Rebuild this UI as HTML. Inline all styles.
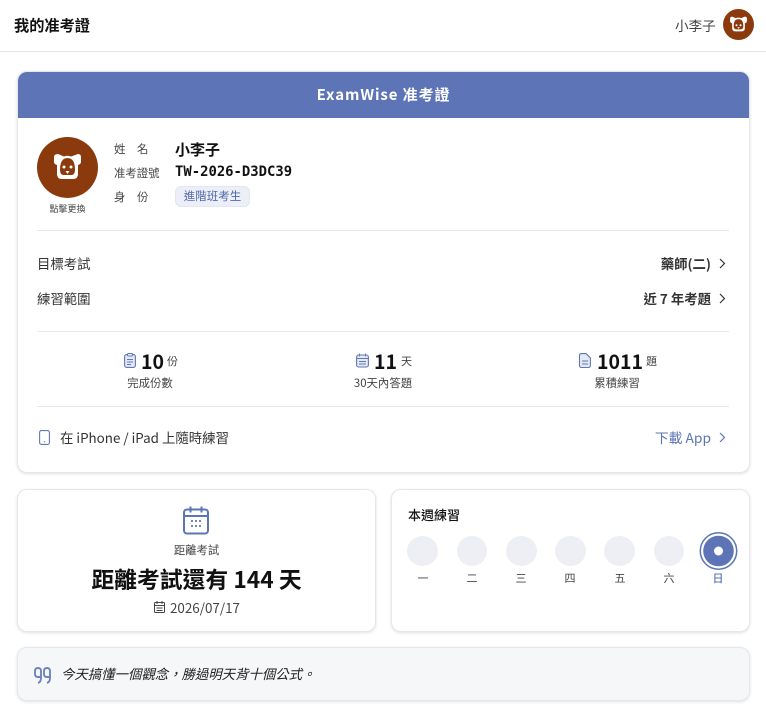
<!DOCTYPE html>
<html lang="zh-Hant"><head><meta charset="utf-8"><style>
*{box-sizing:border-box;margin:0;padding:0}
html,body{width:766px;height:708px;overflow:hidden;background:#fff}
body{position:relative;font-family:"Noto Sans CJK TC","Liberation Sans",sans-serif;color:#111}
.a{position:absolute;white-space:nowrap}
.c{text-align:center}
.card{position:absolute;background:#fff;border:1px solid #e6e7ea;border-radius:10px;box-shadow:0 1px 3px rgba(0,0,0,.12)}
.hr{position:absolute;left:37px;width:692px;height:1px;background:#e8e8ea}
.lab{font-size:11.4px;color:#444;line-height:16px}
.row{font-size:13.4px;color:#333;line-height:18px}
.val{font-size:13.4px;font-weight:700;color:#333;line-height:18px;text-align:right;right:55px}
.num{font-size:19.500px;font-weight:700;color:#111;line-height:24px}
.unit{font-size:11px;color:#444;line-height:14px}
.sub{font-size:11.400px;color:#444;line-height:14px;text-align:center}
.dot{position:absolute;top:536px;width:31px;height:30px;border-radius:50%;background:#eeeff5}
.d{position:absolute;top:571px;width:20px;text-align:center;font-size:11px;color:#444;line-height:14px}
svg{position:absolute;overflow:visible}
</style></head><body>
<div class="a" style="left:14px;top:15px;font-size:15.200px;font-weight:700;line-height:21px">我的准考證</div>
<div class="a" style="left:675px;top:16px;font-size:13.600px;color:#444;line-height:18px">小李子</div>
<svg style="left:723px;top:9px" width="31" height="31" viewBox="0 0 61 61"><circle cx="30.500" cy="30.500" r="30.500" fill="#8b3a0e"/><path d="M18 15L25 18Q30.500 16 36 18L43 15Q47 15 47 19L47 24Q47 27 43 28V38Q43 44 37 44H24Q18 44 18 38V28Q14 27 14 24V19Q14 15 18 15z" fill="#fff"/><path d="M21 34Q21 20 30.500 20T40 34Q40 40 35 40H26Q21 40 21 34z" fill="#8b3a0e"/><circle cx="26.500" cy="32" r="2" fill="#fff"/><circle cx="34.500" cy="32" r="2" fill="#fff"/><path d="M28 36h5l-2.500 3z" fill="#fff"/></svg>
<div class="a" style="left:0;top:51px;width:766px;height:1px;background:#e6e6e8"></div>

<div class="card" style="left:17px;top:71px;width:733px;height:402px"></div>
<div class="a c" style="left:18px;top:72px;width:731px;height:46px;background:#5d74b6;border-radius:9px 9px 0 0;color:#fff;font-size:15px;font-weight:700;line-height:46px;letter-spacing:.9px">ExamWise 准考證</div>

<svg style="left:37px;top:137px" width="61" height="61" viewBox="0 0 61 61"><circle cx="30.500" cy="30.500" r="30.500" fill="#8b3a0e"/><path d="M21 17L27 19.500Q30.500 18 34 19.500L41 17Q44 17 44 20L44 25Q44 27 41 28V37Q41 42 36 42H25Q20 42 20 37V28Q17 27 17 25V20Q17 17 21 17z" fill="#fff"/><path d="M23 33Q23 21 30.500 21T38 33Q38 38 34 38H27Q23 38 23 33z" fill="#8b3a0e"/><circle cx="27" cy="30" r="1.500" fill="#fff"/><circle cx="34" cy="30" r="1.500" fill="#fff"/><path d="M28.500 34h4l-2 3z" fill="#fff"/></svg>
<div class="a c" style="left:37px;top:202px;width:61px;font-size:9px;color:#444;line-height:13px">點擊更換</div>

<div class="a lab" style="left:114px;top:141px">姓</div><div class="a lab" style="left:137px;top:141px">名</div>
<div class="a lab" style="left:114px;top:165px">准考證號</div>
<div class="a lab" style="left:114px;top:189px">身</div><div class="a lab" style="left:137px;top:189px">份</div>
<div class="a" style="left:175px;top:139px;font-size:15px;font-weight:700;line-height:21px;color:#111">小李子</div>
<div class="a" style="left:175px;top:164px;font-family:'DejaVu Sans Mono','Liberation Mono',monospace;font-size:13.900px;font-weight:700;line-height:17px;color:#111">TW-2026-D3DC39</div>
<div class="a c" style="left:175px;top:186px;width:75px;height:21px;background:#eceff7;border:1px solid #e2e6f1;border-radius:6px;font-size:11.500px;line-height:19px;color:#5168ac">進階班考生</div>

<div class="hr" style="top:230px"></div>
<div class="a row" style="left:37px;top:254px">目標考試</div>
<div class="a row" style="left:37px;top:289px">練習範圍</div>
<div class="a val" style="top:254px">藥師(二)</div>
<div class="a val" style="top:289px">近 7 年考題</div>
<svg style="left:718px;top:258px" width="8" height="12" fill="none" stroke="#333" stroke-width="1.200"><path d="M2 1l4.500 4.500L2 10"/></svg>
<svg style="left:718px;top:293px" width="8" height="12" fill="none" stroke="#333" stroke-width="1.200"><path d="M2 1l4.500 4.500L2 10"/></svg>

<div class="hr" style="top:331px"></div>
<svg style="left:124px;top:353px" width="12" height="15" fill="#e6e9f4" stroke="#6078b6" stroke-width="1.100"><rect x=".6" y="1.600" width="10.800" height="12.800" rx="2"/><rect x="3.500" y=".6" width="5" height="2.400" rx="1" fill="#fff"/><path d="M3 6.500h6M3 9h6M3 11.500h4" stroke-width=".9"/></svg>
<div class="a num" style="left:141px;top:349px">10</div><div class="a unit" style="left:167px;top:354px">份</div>
<div class="a sub" style="left:110px;top:376px;width:80px">完成份數</div>

<svg style="left:356px;top:353px" width="13" height="15" fill="#e6e9f4" stroke="#6078b6" stroke-width="1.100"><rect x=".6" y="2" width="11.800" height="12" rx="2"/><path d="M3.500 .5v3M9.500 .5v3M.6 5.500h11.800M3 8.500h7M3 11h7" stroke-width=".9"/></svg>
<div class="a num" style="left:374px;top:349px">11</div><div class="a unit" style="left:401px;top:354px">天</div>
<div class="a sub" style="left:343px;top:376px;width:80px">30天內答題</div>

<svg style="left:579px;top:353px" width="12" height="15" fill="#e6e9f4" stroke="#6078b6" stroke-width="1.100"><path d="M2.500 .6h4.500L11.400 5v7.500q0 2-2 2h-6.900q-2 0-2-2V2.600q0-2 2-2z"/><path d="M3 8h6M3 11h6" stroke-width=".9"/></svg>
<div class="a num" style="left:597px;top:349px">1011</div><div class="a unit" style="left:646px;top:354px">題</div>
<div class="a sub" style="left:577px;top:376px;width:80px">累積練習</div>

<div class="hr" style="top:406px"></div>
<svg style="left:39px;top:430px" width="11" height="15" fill="none" stroke="#6078b6" stroke-width="1.100"><rect x=".6" y=".6" width="9.800" height="13.800" rx="1.800"/><path d="M4.800 11.800h1.400"/></svg>
<div class="a row" style="left:60px;top:428px">在 iPhone / iPad 上隨時練習</div>
<div class="a val" style="top:428px;color:#5d74b6;font-weight:400;font-size:13.800px">下載 App</div>
<svg style="left:718px;top:432px" width="8" height="12" fill="none" stroke="#5d74b6" stroke-width="1.200"><path d="M2 1l4.500 4.500L2 10"/></svg>

<div class="card" style="left:17px;top:489px;width:359px;height:143px"></div>
<svg style="left:183px;top:506px" width="26" height="29" fill="none" stroke="#5d74b6" stroke-width="2"><rect x="1" y="3.500" width="24" height="24" rx="3"/><path d="M7.500 .5v6M18.500 .5v6M1 10h24" /><path d="M8 15h2M12 15h2M16 15h2M8 20h2M12 20h2M16 20h2" stroke-width="1.800"/></svg>
<div class="a c" style="left:17px;top:543px;width:359px;font-size:11.400px;color:#444;line-height:15px">距離考試</div>
<div class="a c" style="left:17px;top:564px;width:359px;font-size:22.800px;font-weight:700;color:#111;line-height:30px">距離考試還有 144 天</div>
<svg style="left:154px;top:601px" width="12" height="13" fill="none" stroke="#444" stroke-width="1"><rect x=".5" y="1.500" width="10" height="10" rx="1"/><path d="M3 0v3M8 0v3M.5 4.500h10M2.500 7h6M2.500 9.500h6" /></svg>
<div class="a" style="left:170px;top:598px;font-size:13.400px;color:#444;line-height:18px">2026/07/17</div>

<div class="card" style="left:391px;top:489px;width:359px;height:143px"></div>
<div class="a" style="left:408px;top:506px;font-size:13px;font-weight:500;color:#111;line-height:18px">本週練習</div>
<div class="dot" style="left:407px"></div><div class="dot" style="left:457px;width:30px"></div><div class="dot" style="left:506px"></div><div class="dot" style="left:555px"></div><div class="dot" style="left:604px"></div><div class="dot" style="left:654px;width:30px"></div>
<svg style="left:700px;top:532px" width="38" height="38"><circle cx="18.500" cy="19" r="18.200" fill="#fff" stroke="#5d74b6" stroke-width="1.500"/><circle cx="18.500" cy="19" r="15.300" fill="#5d74b6"/><circle cx="18.500" cy="19" r="4.500" fill="#fff"/></svg>
<div class="d" style="left:413px">一</div><div class="d" style="left:462px">二</div><div class="d" style="left:511px">三</div><div class="d" style="left:560px">四</div><div class="d" style="left:610px">五</div><div class="d" style="left:659px">六</div><div class="d" style="left:708px;color:#5d74b6;font-weight:500">日</div>

<div class="card" style="left:17px;top:647px;width:733px;height:54px;background:#f6f7f9"></div>
<svg style="left:33px;top:666px" width="18" height="18" fill="none" stroke="#6f84bd" stroke-width="1.900"><path d="M5 17q3-1 3-5V5q0-3-3-3T2 5v3q0 3 3 3h3"/><path d="M14 17q3-1 3-5V5q0-3-3-3t-3 3v3q0 3 3 3h3"/></svg>
<div class="a" style="left:61px;top:664px;font-size:13.400px;font-style:italic;color:#222;line-height:18px">今天搞懂一個觀念，勝過明天背十個公式。</div>
</body></html>
